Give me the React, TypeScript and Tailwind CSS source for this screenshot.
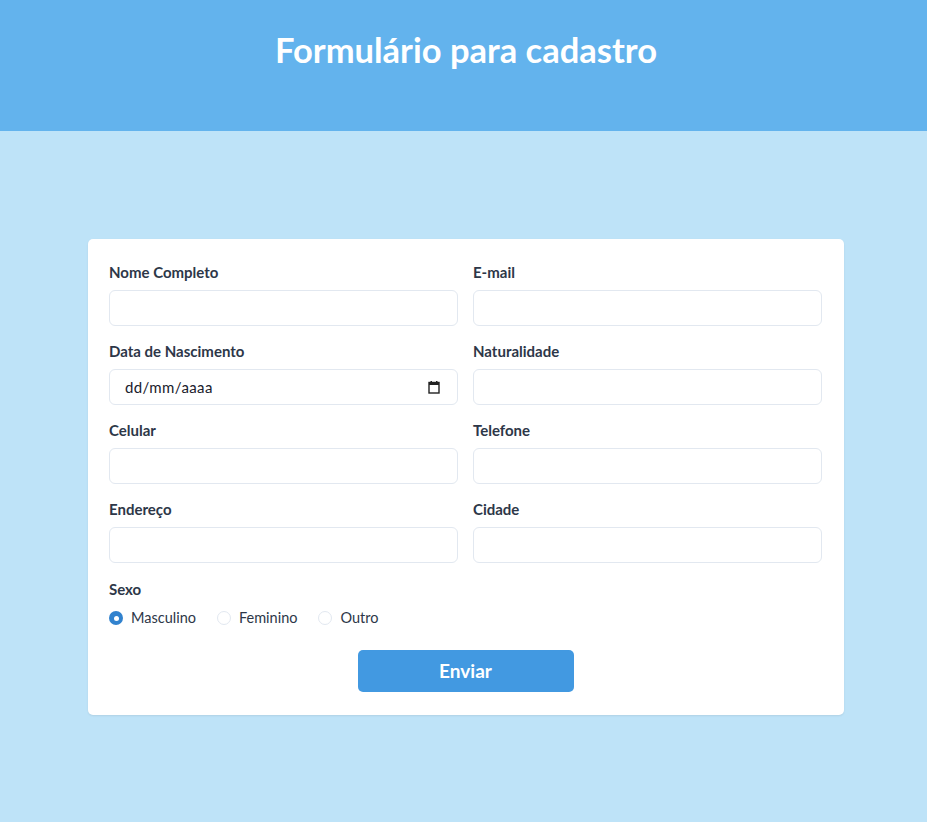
import React from "react";

const font = { fontFamily: "Lato, 'Open Sans', sans-serif" };

function Field({ label, children }: { label: string; children?: React.ReactNode }) {
  return (
    <div className="flex flex-col">
      <label className="text-[15px] leading-[20px] font-bold text-[#2d3748] mb-[8px]">{label}</label>
      {children ?? (
        <input
          type="text"
          className="h-[36px] w-full rounded-[6px] border border-[#e2e8f0] bg-white px-4 text-[14px] outline-none"
        />
      )}
    </div>
  );
}

function Radio({ label, checked }: { label: string; checked?: boolean }) {
  return (
    <div className="flex items-center">
      {checked ? (
        <span className="flex h-[14px] w-[14px] items-center justify-center rounded-full bg-[#3182ce]">
          <span className="h-[5px] w-[5px] rounded-full bg-white" />
        </span>
      ) : (
        <span className="h-[14px] w-[14px] rounded-full border border-[#e2e8f0] bg-white" />
      )}
      <span className="ml-[8px] text-[14.5px] leading-[20px] text-[#2d3748]">{label}</span>
    </div>
  );
}

export default function App() {
  return (
    <div className="min-h-screen bg-[#bee3f8]" style={font}>
      <div className="h-[131px] bg-[#63b3ed] pl-[5px] pt-[26px]">
        <h1 className="text-center text-[34.5px] leading-[48px] font-bold text-white">Formulário para cadastro</h1>
      </div>
      <div className="pl-[5px] pt-[108px]">
        <div className="mx-auto w-[756px] rounded-[5px] bg-white pl-[21px] pr-[22px] pt-[23px] pb-[23px] shadow-[0_1px_2px_rgba(0,0,0,0.08)]">
          <div className="grid grid-cols-2 gap-x-[15px] gap-y-[15px]">
            <Field label="Nome Completo" />
            <Field label="E-mail" />
            <Field label="Data de Nascimento">
              <div className="flex h-[36px] w-full items-center justify-between rounded-[6px] border border-[#e2e8f0] bg-white pl-[15px] pr-[17px]">
                <span className="text-[15px] text-[#1a202c] tracking-[0.4px]">dd/mm/aaaa</span>
                <svg width="12" height="13" viewBox="0 0 12 13">
                  <rect x="1" y="1.5" width="10" height="10.5" fill="none" stroke="#222" strokeWidth="1.4" />
                  <rect x="1" y="1.5" width="10" height="2.5" fill="#222" />
                  <rect x="2.5" y="0" width="1.5" height="2" fill="#222" />
                  <rect x="8" y="0" width="1.5" height="2" fill="#222" />
                </svg>
              </div>
            </Field>
            <Field label="Naturalidade" />
            <Field label="Celular" />
            <Field label="Telefone" />
            <Field label="Endereço" />
            <Field label="Cidade" />
          </div>
          <div className="mt-[16px] text-[15px] leading-[20px] font-bold text-[#2d3748]">Sexo</div>
          <div className="mt-[9px] flex items-center gap-[21px]">
            <Radio label="Masculino" checked />
            <Radio label="Feminino" />
            <Radio label="Outro" />
          </div>
          <div className="mt-[22px] flex justify-center">
            <button className="h-[42px] w-[216px] rounded-[5px] bg-[#4299e1] text-[19px] font-bold text-white">
              Enviar
            </button>
          </div>
        </div>
      </div>
    </div>
  );
}
